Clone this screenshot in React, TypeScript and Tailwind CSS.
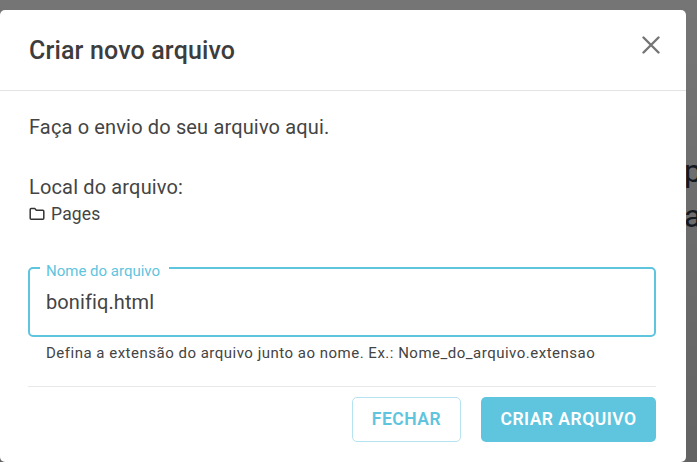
const roboto = "font-['Roboto','Liberation_Sans',sans-serif]";

function CloseIcon() {
  return (
    <svg className="mb-[10px]" width="18" height="18" viewBox="0 0 18 18" fill="none" stroke="#757575" strokeWidth="2.4" strokeLinecap="round">
      <path d="M1.5 1.5 L16.5 16.5 M16.5 1.5 L1.5 16.5" />
    </svg>
  );
}

function FolderIcon() {
  return (
    <svg width="16" height="14" viewBox="0 0 16 14" fill="none" stroke="#333" strokeWidth="1.5" strokeLinejoin="round">
      <path d="M1.2 2.6 C1.2 2 1.7 1.6 2.2 1.6 H5.8 L7.3 3.2 H13.8 C14.4 3.2 14.8 3.6 14.8 4.2 V11.2 C14.8 11.8 14.4 12.2 13.8 12.2 H2.2 C1.7 12.2 1.2 11.8 1.2 11.2 Z" />
    </svg>
  );
}

export default function App() {
  return (
    <div className={`${roboto} flex h-[462px] w-[697px] overflow-hidden bg-gradient-to-b from-[#757575] to-[#636363]`}>
      <div className="mt-[10px] flex h-[452px] w-[686px] shrink-0 flex-col rounded-[5px] bg-white text-[#444]">
        <div className="flex h-[81px] shrink-0 items-center justify-between border-b border-[#e3e3e3] pl-[29px] pr-[26px]">
          <h2 className="text-[25px] font-medium leading-none tracking-[0.15px] text-[#3d3d3d]">Criar novo arquivo</h2>
          <CloseIcon />
        </div>
        <div className="flex flex-1 flex-col pl-[28px] pr-[30px] pt-[24px]">
          <p className="pl-px text-[20px] leading-[24px] tracking-[0.15px]">Faça o envio do seu arquivo aqui.</p>
          <p className="mt-[36px] pl-px text-[20px] leading-[24px] tracking-[0.15px]">Local do arquivo:</p>
          <div className="mt-[3px] flex items-center gap-[6px] pl-px text-[17.5px] leading-[24px] tracking-[0.19px]">
            <FolderIcon />
            <span>Pages</span>
          </div>
          <div className="relative mt-[41px] h-[70px] rounded-[5px] border-2 border-[#5fc4de] pl-[16px] pt-[19px]">
            <span className="absolute left-[10px] top-[-7px] bg-white pl-[6px] pr-[9px] text-[15px] leading-[18px] text-[#5fc4de]">Nome do arquivo</span>
            <span className="text-[20px] leading-[28px] tracking-[0.1px]">bonifiq.html</span>
          </div>
          <p className="mt-[7px] whitespace-nowrap pl-[18px] text-[15px] leading-[18px] tracking-[0.5px] text-[#444]">
            Defina a extensão do arquivo junto ao nome. Ex.: Nome_do_arquivo.extensao
          </p>
          <div className="mt-[24px] flex justify-end gap-[20px] border-t border-[#e8e8e8] pt-[10px]">
            <button className="h-[45px] w-[109px] rounded-[5px] border border-[#b5e3ef] bg-white text-[17.5px] font-semibold tracking-[0.5px] text-[#5fc4de]">FECHAR</button>
            <button className="h-[45px] w-[175px] rounded-[5px] bg-[#5fc4de] text-[17.5px] font-semibold tracking-[0.5px] text-white">CRIAR ARQUIVO</button>
          </div>
        </div>
      </div>
      <div className="flex w-[11px] shrink-0 flex-col overflow-hidden pt-[149px] text-[32px] leading-[45px] text-[#14181f]">
        <span className="-ml-[2px]">p</span>
        <span className="-ml-[2px]">a</span>
      </div>
    </div>
  );
}
